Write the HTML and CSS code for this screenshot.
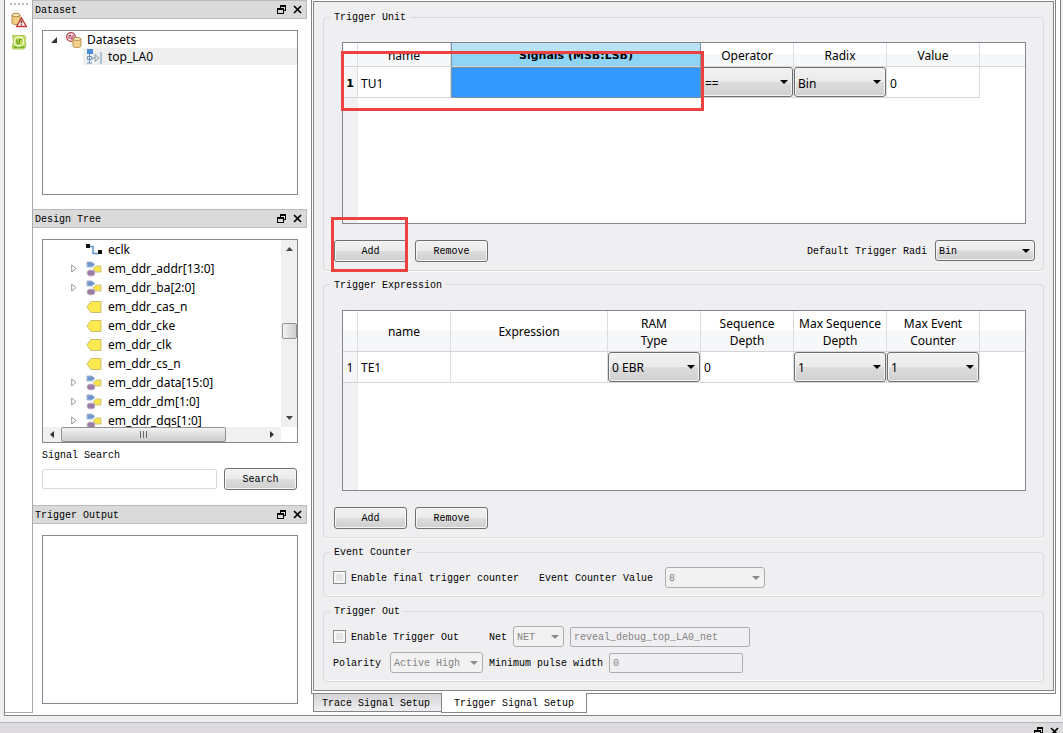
FILE: index.html
```html
<!DOCTYPE html>
<html lang="en">
<head>
<meta charset="utf-8">
<title>Trigger Signal Setup</title>
<link rel="stylesheet" href="styles.css">
</head>
<body>
<svg class="defs" width="0" height="0" aria-hidden="true">
  <defs>
    <symbol id="float" viewBox="0 0 9 9"><path d="M3 0h6v6H7V5h1V2H4v1H3zM0 3h7v6H0zm1 2v3h5V5z" fill="#000" fill-rule="evenodd"/></symbol>
    <symbol id="close" viewBox="0 0 9 9"><path d="M1 1l7 7M8 1L1 8" stroke="#000" stroke-width="1.7" fill="none"/></symbol>
    <symbol id="bus" viewBox="0 0 16 16">
      <path d="M1 1h5l3 2.500-3 2.500H1z" fill="#6f97cb" stroke="#a9bcd6"/>
      <path d="M7 8l3-3h5v6h-5z" fill="#f7e54a" stroke="#d2c587"/>
      <ellipse cx="5" cy="12" rx="4" ry="3" fill="#9b7ba4" stroke="#c0adc5"/>
    </symbol>
    <symbol id="port" viewBox="0 0 16 16"><path d="M.8 8L5 2.500h10v11H5z" fill="#fbe94f" stroke="#cdbf72"/></symbol>
    <symbol id="twist" viewBox="0 0 6 9"><path d="M.7 1v7l4.300-3.500z" fill="#fff" stroke="#999"/></symbol>
  </defs>
</svg>
<main class="frame">
  <nav class="toolbar" aria-label="Tools">
    <span class="grip"></span>
    <button class="tool" aria-label="Dataset warning"><svg width="16" height="16" viewBox="0 0 16 16"><path d="M1 3v8c0 2 8 2 8 0V3" fill="#f0cf82" stroke="#b38b45"/><ellipse cx="5" cy="3" rx="4" ry="1.800" fill="#fae9b5" stroke="#b38b45"/><path d="M10.500 6l4.800 8.500H5.700z" fill="#fff" stroke="#c33a35" stroke-width="1.400"/><path d="M10.500 8.500v3M10.500 12.300v1.200" stroke="#7c2320" stroke-width="1.500"/></svg></button>
    <button class="tool" aria-label="Run"><svg width="16" height="16" viewBox="0 0 16 16"><path d="M1.500 1.500h12l1.500 2-1 3 1 4-1 3.500-2 1h-10l-1-2 1.500-5z" fill="#c7de70" stroke="#a9c65a"/><path d="M2 12h12l-1 2H3z" fill="#7fb52a"/><circle cx="8" cy="7.500" r="4.500" fill="#b6d84a" stroke="#f4fadb" stroke-width="1.300"/><path d="M6 5.500v3c0 1.700 2.500 1.700 2.500 0v-3h2" fill="none" stroke="#5b8c1c"/></svg></button>
  </nav>

  <aside class="docks">
    <header class="dock-title"><h2>Dataset</h2><button aria-label="Float Dataset"><svg width="9" height="9"><use href="#float"/></svg></button><button aria-label="Close Dataset"><svg width="9" height="9"><use href="#close"/></svg></button></header>
    <section class="dock-body dataset">
      <ul class="box tree compact">
        <li><svg class="open" width="6" height="6"><path d="M6 0v6H0z" fill="#333"/></svg><svg width="16" height="16" viewBox="0 0 16 16"><circle cx="5" cy="5" r="4.300" fill="#fbeaea" stroke="#b5404a" stroke-width="1.300"/><path d="M3 7V3.500h2V7h2V3" fill="none" stroke="#a32c50"/><path d="M7 7v7c0 2 8 2 8 0V7" fill="#f3cf8c" stroke="#b98f50"/><ellipse cx="11" cy="7" rx="4" ry="1.500" fill="#fbedc4" stroke="#b98f50"/></svg><span>Datasets</span></li>
        <li class="child"><svg width="16" height="16" viewBox="0 0 16 16"><path d="M1 0h6v5H1z" fill="#4b8fdc"/><path d="M1.500 7.500h4v3h-4zM3.500 5v9M1 14h5M5.500 9H9M15 3v12" fill="none" stroke="#6b93bd"/><path d="M9 5.500v7l4-3.500z" fill="#dfe5e8" stroke="#8c9da8"/></svg><span>top_LA0</span></li>
      </ul>
    </section>

    <header class="dock-title"><h2>Design Tree</h2><button aria-label="Float Design Tree"><svg width="9" height="9"><use href="#float"/></svg></button><button aria-label="Close Design Tree"><svg width="9" height="9"><use href="#close"/></svg></button></header>
    <section class="dock-body design">
      <div class="box scroller">
        <ul class="tree">
          <li><i class="twist"></i><svg width="16" height="16" viewBox="0 0 16 16"><path d="M3 4.500h4v7h6" fill="none" stroke="#5d94cc" stroke-width="1.500"/><path d="M0 2h4v4H0zM12 8h4v4h-4z" fill="#111"/></svg><span>eclk</span></li>
          <li><svg class="twist" width="6" height="9"><use href="#twist"/></svg><svg width="16" height="16"><use href="#bus"/></svg><span>em_ddr_addr[13:0]</span></li>
          <li><svg class="twist" width="6" height="9"><use href="#twist"/></svg><svg width="16" height="16"><use href="#bus"/></svg><span>em_ddr_ba[2:0]</span></li>
          <li><i class="twist"></i><svg width="16" height="16"><use href="#port"/></svg><span>em_ddr_cas_n</span></li>
          <li><i class="twist"></i><svg width="16" height="16"><use href="#port"/></svg><span>em_ddr_cke</span></li>
          <li><i class="twist"></i><svg width="16" height="16"><use href="#port"/></svg><span>em_ddr_clk</span></li>
          <li><i class="twist"></i><svg width="16" height="16"><use href="#port"/></svg><span>em_ddr_cs_n</span></li>
          <li><svg class="twist" width="6" height="9"><use href="#twist"/></svg><svg width="16" height="16"><use href="#bus"/></svg><span>em_ddr_data[15:0]</span></li>
          <li><svg class="twist" width="6" height="9"><use href="#twist"/></svg><svg width="16" height="16"><use href="#bus"/></svg><span>em_ddr_dm[1:0]</span></li>
          <li><svg class="twist" width="6" height="9"><use href="#twist"/></svg><svg width="16" height="16"><use href="#bus"/></svg><span>em_ddr_dqs[1:0]</span></li>
        </ul>
        <div class="vbar"><svg width="7" height="4"><path d="M0 4h7L3.500 0z" fill="#444"/></svg><span class="thumb"></span><svg width="7" height="4"><path d="M0 0h7L3.500 4z" fill="#444"/></svg></div>
        <div class="hbar"><svg width="4" height="7"><path d="M4 0v7L0 3.500z" fill="#333"/></svg><span class="thumb"><svg width="8" height="7"><path d="M.5 0v7M3.500 0v7M6.500 0v7" stroke="#666"/></svg></span><svg width="4" height="7"><path d="M0 0v7l4-3.500z" fill="#333"/></svg></div>
      </div>
      <label for="search">Signal Search</label>
      <div class="search"><input id="search" type="text"><button class="btn">Search</button></div>
    </section>

    <header class="dock-title"><h2>Trigger Output</h2><button aria-label="Float Trigger Output"><svg width="9" height="9"><use href="#float"/></svg></button><button aria-label="Close Trigger Output"><svg width="9" height="9"><use href="#close"/></svg></button></header>
    <section class="dock-body output"><div class="box"></div></section>
  </aside>

  <section class="work">
    <div class="outer"><form class="panel">
      <fieldset class="grow">
        <legend>Trigger Unit</legend>
        <div class="grid-box">
          <table>
            <colgroup><col class="c-head"><col class="c-cell"><col class="c-signals"><col class="c-cell"><col class="c-cell"><col class="c-cell"><col></colgroup>
            <thead><tr><th></th><th>name</th><th class="sel">Signals (MSB:LSB)</th><th>Operator</th><th>Radix</th><th>Value</th><th class="rest"></th></tr></thead>
            <tbody><tr><th class="current" scope="row">1</th><td>TU1</td><td class="sel"></td><td class="ctl"><span class="combo"><select aria-label="Operator"><option>==</option></select></span></td><td class="ctl"><span class="combo"><select aria-label="Radix"><option>Bin</option></select></span></td><td>0</td><td class="blank"></td></tr></tbody>
          </table>
          <span class="mark mark-row"></span>
        </div>
        <div class="actions">
          <span class="marked"><button type="button" class="btn">Add</button><span class="mark mark-btn"></span></span>
          <button type="button" class="btn">Remove</button>
          <label class="push" for="radix">Default Trigger Radi</label>
          <span class="combo w100"><select id="radix"><option>Bin</option></select></span>
        </div>
      </fieldset>

      <fieldset class="grow">
        <legend>Trigger Expression</legend>
        <div class="grid-box">
          <table class="tall">
            <colgroup><col class="c-head"><col class="c-cell"><col class="c-expr"><col class="c-cell"><col class="c-cell"><col class="c-cell"><col class="c-cell"><col></colgroup>
            <thead><tr><th></th><th>name</th><th>Expression</th><th>RAM<br>Type</th><th>Sequence<br>Depth</th><th>Max Sequence<br>Depth</th><th>Max Event<br>Counter</th><th class="rest"></th></tr></thead>
            <tbody><tr><th scope="row">1</th><td>TE1</td><td></td><td class="ctl"><span class="combo"><select aria-label="RAM Type"><option>0 EBR</option></select></span></td><td>0</td><td class="ctl"><span class="combo"><select aria-label="Max Sequence Depth"><option>1</option></select></span></td><td class="ctl"><span class="combo"><select aria-label="Max Event Counter"><option>1</option></select></span></td><td class="blank"></td></tr></tbody>
          </table>
        </div>
        <div class="actions">
          <button type="button" class="btn">Add</button>
          <button type="button" class="btn">Remove</button>
        </div>
      </fieldset>

      <fieldset>
        <legend>Event Counter</legend>
        <div class="line">
          <input type="checkbox" id="final"><label for="final">Enable final trigger counter</label>
          <label class="gap-l" for="count">Event Counter Value</label>
          <span class="combo off w100 gap-m"><select id="count" disabled><option>8</option></select></span>
        </div>
      </fieldset>

      <fieldset>
        <legend>Trigger Out</legend>
        <div class="line">
          <input type="checkbox" id="out"><label for="out">Enable Trigger Out</label>
          <label class="gap-xl" for="net">Net</label>
          <span class="combo off w50"><select id="net" disabled><option>NET</option></select></span>
          <input class="text w180" type="text" aria-label="Net name" value="reveal_debug_top_LA0_net" disabled>
        </div>
        <div class="line">
          <label for="pol">Polarity</label>
          <span class="combo off w93 gap-s"><select id="pol" disabled><option>Active High</option></select></span>
          <label for="pulse">Minimum pulse width</label>
          <input class="text w133" type="text" id="pulse" value="0" disabled>
        </div>
      </fieldset>
    </form></div>
    <div class="tabs" role="tablist">
      <button role="tab" aria-selected="false">Trace Signal Setup</button>
      <button role="tab" aria-selected="true">Trigger Signal Setup</button>
    </div>
  </section>
</main>
<footer class="bottom-dock"><button aria-label="Float panel"><svg width="9" height="9"><use href="#float"/></svg></button><button aria-label="Close panel"><svg width="9" height="9"><use href="#close"/></svg></button></footer>
</body>
</html>
```
FILE: styles.css
```css
* { box-sizing: border-box; }
html, body { height: 100%; }
body {
  margin: 0; display: flex; flex-direction: column; overflow: hidden;
  background: #efeff1; color: #000;
  font: 10px/14px "Liberation Mono", monospace;
}
.defs { position: absolute; }
button, input, select { font: inherit; color: inherit; margin: 0; padding: 0; border: 0; }
button { background: none; }
svg { display: block; flex: none; }
ul { list-style: none; margin: 0; padding: 0; }

.frame {
  flex: 1; min-height: 0; display: flex;
  margin: 0 2px 6px 4px; background: #fff;
  border: 1px solid #858587; border-top: 0;
}
.toolbar {
  width: 28px; margin-bottom: 2px; padding-top: 3px;
  display: flex; flex-direction: column; align-items: center;
  border-right: 1px solid #aaa; border-bottom: 1px solid #aaa;
}
.grip { width: 18px; border-top: 2px dotted #bbb; margin-bottom: 7px; }
.tool { height: 16px; margin-bottom: 6px; }

.docks { width: 274px; display: flex; flex-direction: column; }
.dock-title {
  height: 19px; flex: none; display: flex; align-items: center; gap: 7px;
  padding: 0 4px 0 2px; background: #dadada; border: 1px solid #bbb; border-left: 0;
}
.dock-title h2 { font: inherit; margin: 0; padding-top: 2px; flex: 1; }
.dock-title button, .bottom-dock button { width: 9px; height: 9px; }
.dock-body { display: flex; flex-direction: column; min-height: 0; padding: 11px 9px 0; }
.dataset { flex: 165 0 0; padding-bottom: 14px; }
.design { flex: 251 0 0; padding-bottom: 15px; }
.output { flex: 169 0 0; padding-bottom: 11px; }
.box { flex: 1; min-height: 0; background: #fff; border: 1px solid #828790; overflow: hidden; }

.tree { font: 12px/19px "Noto Sans", sans-serif; min-height: 0; }
.tree li { display: flex; align-items: center; height: 19px; padding-left: 28px; gap: 6px; white-space: nowrap; }
.tree .twist { width: 6px; margin-right: 3px; }
.compact { line-height: 17px; }
.compact li { height: 17px; padding-left: 8px; gap: 5px; }
.compact .open { margin-right: 4px; }
.compact .child { margin-left: 40px; padding-left: 3px; background: #efefef; gap: 6px; }

.scroller { display: grid; grid-template-columns: 1fr 16px; grid-template-rows: 1fr 15px; }
.scroller .tree { overflow: hidden; }
.vbar, .hbar { display: flex; align-items: center; background: #f0f0f1; }
.vbar { flex-direction: column; padding: 7px 0; }
.vbar .thumb { width: 15px; height: 16px; margin: 72px 0 auto; }
.hbar { padding: 0 7px; }
.hbar .thumb { width: 165px; height: 15px; margin: 0 auto 0 7px; display: flex; align-items: center; justify-content: center; }
.thumb { border: 1px solid #929294; border-radius: 2px; background: linear-gradient(#f3f3f3, #dedee0 50%, #cfcfd1); }
.vbar .thumb { background: linear-gradient(90deg, #f3f3f3, #dedee0 50%, #cfcfd1); }
.design label { margin: 6px 0 5px; }
.search { display: flex; align-items: center; gap: 7px; padding-right: 1px; }
.search input { flex: 1; min-width: 0; height: 20px; border: 1px solid #dadadc; border-radius: 2px; }

.btn {
  width: 73px; height: 22px; padding-top: 2px; border: 1px solid #707070; border-radius: 3px;
  box-shadow: inset 0 0 0 1px #f6f6f6;
  background: linear-gradient(#f2f2f2, #ebebeb 48%, #dcdcdc 52%, #cfcfcf);
}

.work { flex: 1; min-width: 0; display: flex; flex-direction: column; padding: 0 4px 2px; }
.outer { flex: 1; min-height: 0; display: flex; padding: 1px 1px 2px; border: 1px solid #858587; border-top: 0; }
.panel {
  flex: 1; min-width: 0; display: flex; flex-direction: column; gap: 7px;
  padding: 8px 9px; background: #efeff1; border: 1px solid #858587;
}
fieldset {
  min-width: 0; margin: 0; padding: 8px 9px 8px; display: flex; flex-direction: column; gap: 5px;
  border: 1px solid #dadadc; border-radius: 4px; box-shadow: inset 0 -1px #fbfbfb;
}
fieldset.grow { flex: 1; padding: 18px 8px 8px 10px; gap: 16px; box-shadow: 0 1px #fbfbfb; }
legend { padding: 2px 4px 0; margin-left: -3px; line-height: 12px; }
.grow legend { margin-left: -4px; }

.grid-box {
  position: relative; flex: 1; margin: 0 9px 0 8px; border: 1px solid #828790;
  background: linear-gradient(90deg, #f1f1f3 15px, #fff 15px);
  font: 12px/17px "Noto Sans", sans-serif;
}
table { width: 100%; table-layout: fixed; border-collapse: separate; border-spacing: 0; }
.c-head { width: 15px; }
.c-cell { width: 93px; }
.c-signals { width: 250px; }
.c-expr { width: 157px; }
th, td { padding: 2px 0 0; border-right: 1px solid #dcdde0; border-bottom: 1px solid #d5d5d8; white-space: nowrap; }
th { font-weight: 400; text-align: center; }
thead th { height: 24px; background: linear-gradient(#fff 50%, #f6f7f9 50%); }
.tall thead th { height: 41px; }
tbody th, td { height: 31px; }
tbody th { background: #f6f6f8; }
td { padding-left: 3px; }
.rest, .blank { border-right: 0; }
.blank { border-bottom: 0; }
thead .sel { font: bold 11px/17px "DejaVu Sans", sans-serif; background: linear-gradient(#b9e3f5 50%, #8fd3f5 50%); border-right-color: #7a96a8; border-left: 1px solid #7a96a8; }
tbody .sel { background: #3399ff; border: 1px solid #7d93a0; }
.current { font: bold 11px/17px "DejaVu Sans", sans-serif; }
td.ctl { padding: 0; }
.ctl .combo { height: 30px; }

.combo { position: relative; display: flex; height: 21px; }
.combo::after {
  content: ""; position: absolute; right: 5px; top: 50%; margin-top: -2px;
  border: 4px solid transparent; border-top-color: #000; border-bottom: 0; pointer-events: none;
}
.combo select {
  appearance: none; width: 100%; padding: 2px 0 0 3px;
  border: 1px solid #707070; border-radius: 3px; box-shadow: inset 0 0 0 1px #f3f3f3;
  background: linear-gradient(#f2f2f2, #ebebeb 48%, #dcdcdc 52%, #cfcfcf);
}
.combo.off select { background: #f2f2f3; border-color: #adadaf; color: #838383; opacity: 1; }
.combo.off::after { border-top-color: #8a8a8a; }
.w50 { width: 51px; }
.w93 { width: 93px; }
.w100 { width: 100px; }
.w133 { width: 134px; }
.w180 { width: 180px; }

.actions, .line { display: flex; align-items: center; }
.actions { gap: 8px; }
.actions label, .line label { padding-top: 2px; white-space: nowrap; }
.marked { position: relative; display: flex; }
.push { margin-left: auto; }
.line { gap: 6px; }
.line input[type="checkbox"] {
  appearance: none; width: 13px; height: 13px; margin-right: -1px;
  border: 1px solid #8e8f8f; background: #e4e4e6; box-shadow: inset 0 0 0 2px #f6f6f6;
}
.gap-s { margin-left: 3px; }
.gap-m { margin-left: 6px; }
.gap-l { margin-left: 14px; }
.gap-xl { margin-left: 24px; }
.text { height: 20px; padding: 2px 0 0 3px; background: #efeff1; border: 1px solid #adadaf; border-radius: 2px; color: #838383; }

.mark { position: absolute; z-index: 2; border: 3px solid #ec4141; pointer-events: none; }
.mark-row { left: -2px; top: 8px; width: 363px; height: 60px; }
.mark-btn { left: -3px; top: -23px; width: 77px; height: 55px; }

.tabs { display: flex; align-items: flex-start; height: 19px; padding-left: 2px; }
.tabs button {
  height: 18px; padding: 2px 11px 0 8px; border: 1px solid #858587; border-top: 0;
  background: linear-gradient(#d4d4d6, #efeff1);
}
.tabs button[aria-selected="true"] { height: 20px; margin: -1px 0 0 -1px; padding: 3px 12px 0; background: #fff; }

.bottom-dock {
  flex: none; height: 11px; display: flex; justify-content: flex-end; gap: 7px;
  padding: 4px 4px 0; background: #dcdadd; border-top: 1px solid #b4b4b6;
}
```
